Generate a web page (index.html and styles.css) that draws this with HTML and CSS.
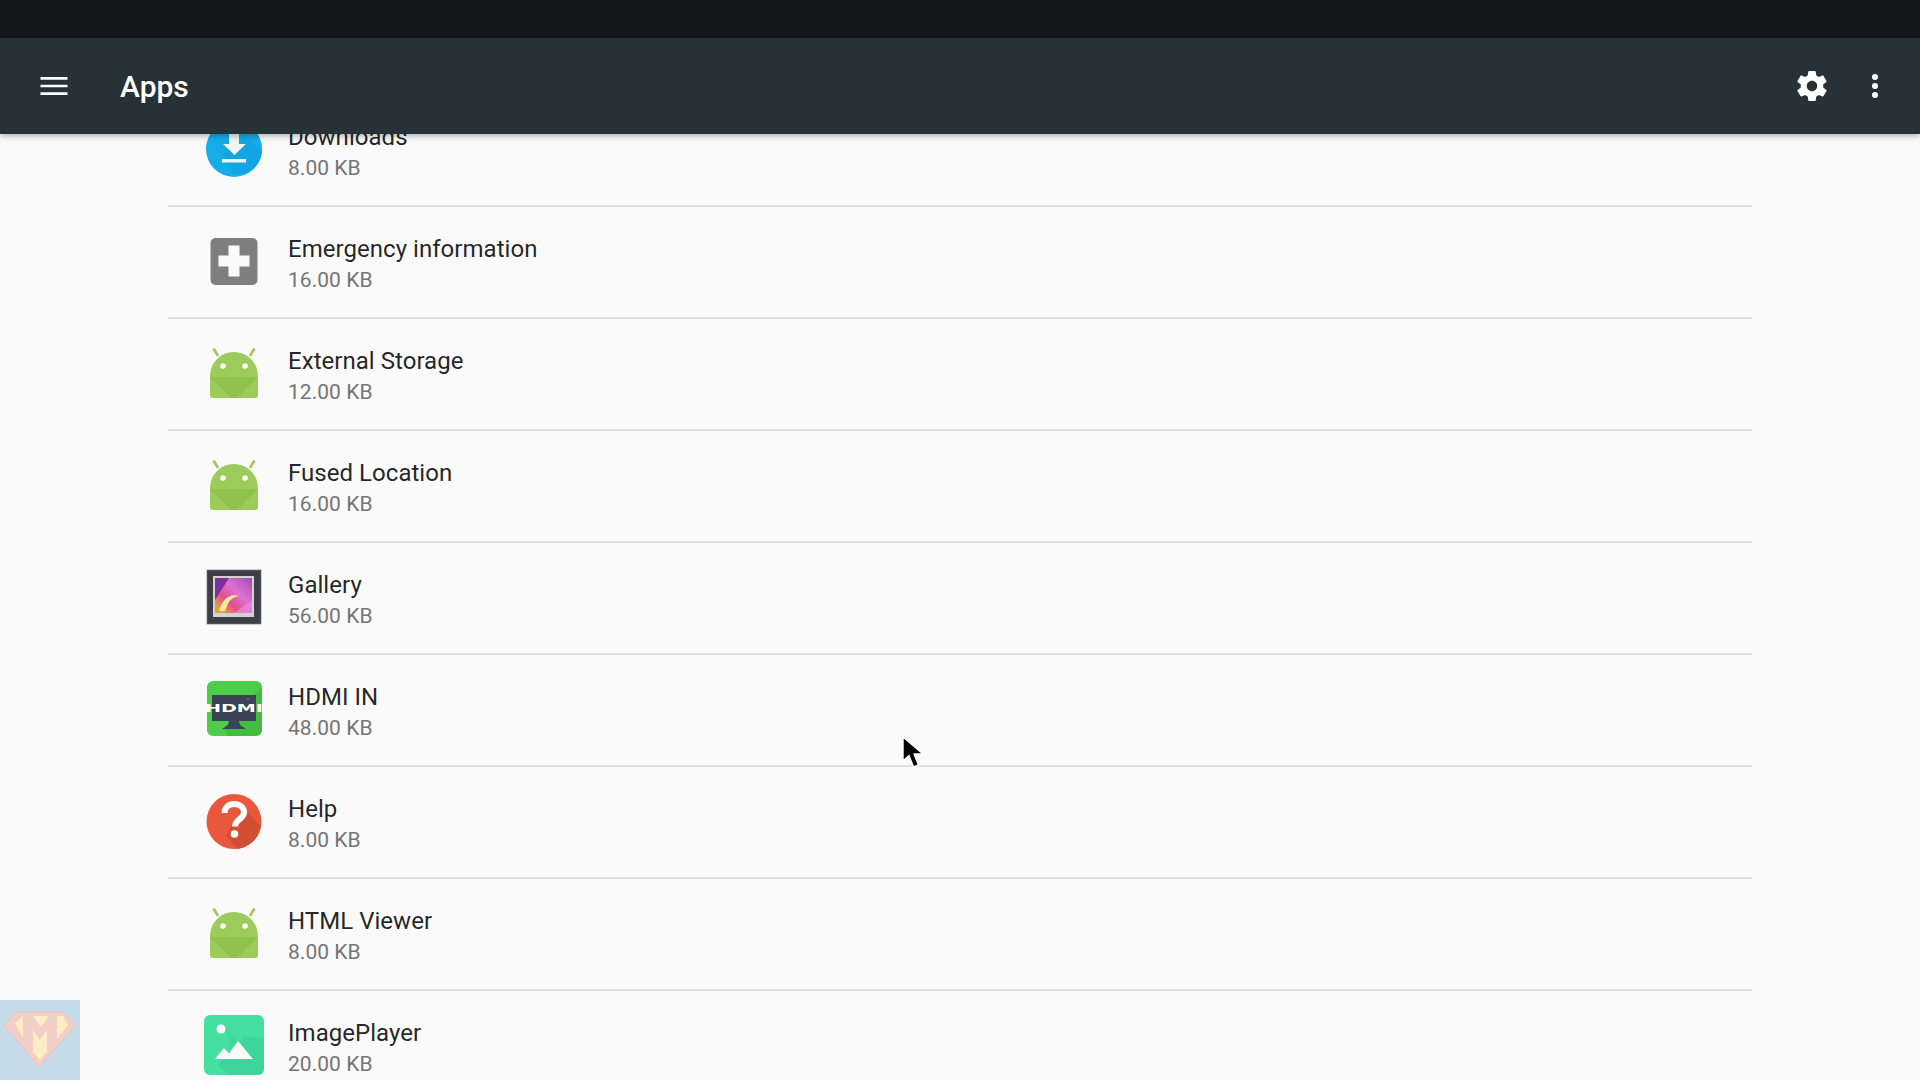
FILE: index.html
```html
<!DOCTYPE html>
<html lang="en">
<head>
<meta charset="utf-8">
<title>Apps</title>
<link rel="stylesheet" href="styles.css">
</head>
<body>
<div class="status-bar"></div>
<header class="app-bar">
  <svg class="bar-icon" viewBox="0 0 24 24"><path fill="#fff" d="M3 6h18v1.800H3zM3 11.100h18v1.800H3zM3 16.200h18V18H3z"/></svg>
  <h1 class="bar-title">Apps</h1>
  <div class="bar-actions">
    <svg class="bar-icon" viewBox="0 0 24 24"><path fill="#fff" d="M19.43 12.98c.04-.32.07-.64.07-.98s-.03-.66-.07-.98l2.11-1.65c.19-.15.24-.42.12-.64l-2-3.46c-.12-.22-.39-.3-.61-.22l-2.49 1c-.52-.4-1.08-.73-1.69-.98l-.38-2.65C14.46 2.18 14.25 2 14 2h-4c-.25 0-.46.18-.49.42l-.38 2.65c-.61.25-1.17.59-1.69.98l-2.49-1c-.23-.09-.49 0-.61.22l-2 3.46c-.13.22-.07.49.12.64l2.11 1.65c-.04.32-.07.65-.07.98s.03.66.07.98l-2.11 1.65c-.19.15-.24.42-.12.64l2 3.46c.12.22.39.3.61.22l2.49-1c.52.4 1.08.73 1.69.98l.38 2.65c.03.24.24.42.49.42h4c.25 0 .46-.18.49-.42l.38-2.65c.61-.25 1.17-.59 1.69-.98l2.49 1c.23.09.49 0 .61-.22l2-3.46c.12-.22.07-.49-.12-.64l-2.11-1.65zM12 15.5c-1.93 0-3.5-1.57-3.5-3.5s1.57-3.5 3.5-3.5 3.5 1.57 3.5 3.5-1.57 3.5-3.5 3.5z"/></svg>
    <svg class="bar-icon" viewBox="0 0 24 24"><circle fill="#fff" cx="12" cy="6" r="2"/><circle fill="#fff" cx="12" cy="12" r="2"/><circle fill="#fff" cx="12" cy="18" r="2"/></svg>
  </div>
</header>
<main class="viewport">
  <ul class="app-list">
    <li class="app-row">
      <svg class="app-icon" viewBox="0 0 60 60"><circle cx="30" cy="29" r="28" fill="#14ade9"/><path d="M30 54a24 24 0 0 0 28-22L40 14 19 34z" fill="#10a3de" opacity=".7"/><path fill="#f2f5f6" d="M25 9h10v15h7L30.500 35 19 24h6z"/><path fill="#f2f5f6" d="M18 39h24v3.500H18z"/></svg>
      <div class="app-text"><div class="app-name">Downloads</div><div class="app-size">8.00 KB</div></div>
    </li>
    <li class="app-row">
      <svg class="app-icon" viewBox="0 0 60 60"><rect x="6.500" y="6" width="47" height="47" rx="5" fill="#7f7f7f"/><path fill="#fafafa" d="M24.500 13.500h11v10h10v11h-10v10h-11v-10h-10v-11h10z"/></svg>
      <div class="app-text"><div class="app-name">Emergency information</div><div class="app-size">16.00 KB</div></div>
    </li>
    <li class="app-row">
      <svg class="app-icon" viewBox="0 0 60 60"><use href="#android"/></svg>
      <div class="app-text"><div class="app-name">External Storage</div><div class="app-size">12.00 KB</div></div>
    </li>
    <li class="app-row">
      <svg class="app-icon" viewBox="0 0 60 60"><use href="#android"/></svg>
      <div class="app-text"><div class="app-name">Fused Location</div><div class="app-size">16.00 KB</div></div>
    </li>
    <li class="app-row">
      <svg class="app-icon" viewBox="0 0 60 60">
        <defs><linearGradient id="photo" x1="0" y1="1" x2="1" y2="0"><stop offset="0" stop-color="#f0c22c"/><stop offset=".35" stop-color="#e0508a"/><stop offset=".6" stop-color="#dc72d4"/><stop offset="1" stop-color="#a24cb0"/></linearGradient></defs>
        <rect x="3" y="2" width="54" height="54" fill="#3e3e46"/>
        <rect x="3" y="2" width="54" height="54" fill="none" stroke="#77777d" stroke-width=".7"/>
        <rect x="9" y="8" width="41" height="41" fill="#d2d2d5"/>
        <rect x="11" y="10" width="37" height="35" fill="url(#photo)"/>
        <path d="M11 10h14L11 32z" fill="#7d2f9b"/>
        <path d="M48 12v20L30 45h18z" fill="#e78ae0" opacity=".7"/>
        <path d="M15 43c3-11 10-18 20-15-6 1-10 4-12 10l-2 5z" fill="#fde9a0"/>
        <path d="M11 36l6 9H11z" fill="#e8a020"/>
      </svg>
      <div class="app-text"><div class="app-name">Gallery</div><div class="app-size">56.00 KB</div></div>
    </li>
    <li class="app-row">
      <svg class="app-icon" viewBox="0 0 60 60">
        <rect x="3" y="1" width="55" height="55" rx="6" fill="#4ecb49"/>
        <path d="M58 8v42a6 6 0 0 1-6 6H24l-4-8 36-40z" fill="#3eb53e" opacity=".65"/>
        <rect x="8" y="15" width="44" height="26" fill="#3a4456"/>
        <path d="M25 41h10l1 4 6 4H18l6-4z" fill="#3a4456"/>
        <circle cx="44" cy="19" r="1" fill="#e2483f"/>
        <text class="hdmi-text" x="1" y="31.500" textLength="58" lengthAdjust="spacingAndGlyphs">HDMI</text>
      </svg>
      <div class="app-text"><div class="app-name">HDMI IN</div><div class="app-size">48.00 KB</div></div>
    </li>
    <li class="app-row">
      <svg class="app-icon" viewBox="0 0 60 60">
        <circle cx="30" cy="29.500" r="27.500" fill="#e9573d"/>
        <path d="M38 15l19 19a27.500 27.500 0 0 1-24 23L22 44z" fill="#d24e35"/>
        <path d="M20.500 21c0-5.500 4.300-9 9.700-9s9.800 3.300 9.800 8.300c0 6.700-9 7-9 14.200" fill="none" stroke="#fff" stroke-width="6"/>
        <circle cx="30.500" cy="42" r="3.800" fill="#fff"/>
      </svg>
      <div class="app-text"><div class="app-name">Help</div><div class="app-size">8.00 KB</div></div>
    </li>
    <li class="app-row">
      <svg class="app-icon" viewBox="0 0 60 60"><use href="#android"/></svg>
      <div class="app-text"><div class="app-name">HTML Viewer</div><div class="app-size">8.00 KB</div></div>
    </li>
    <li class="app-row">
      <svg class="app-icon" viewBox="0 0 60 60">
        <rect x="0" y="-1" width="60" height="60" rx="6" fill="#45e0a0"/>
        <path d="M60 22v31a6 6 0 0 1-6 6H24L14 49 40 20z" fill="#3bd095" opacity=".7"/>
        <path d="M21 11l28 32H30z" fill="#3bd095" opacity=".55"/>
        <circle cx="17" cy="13" r="4.500" fill="#fafafa"/>
        <path d="M11 43l9-11 5 5.500L34 25l15 18z" fill="#fafafa"/>
      </svg>
      <div class="app-text"><div class="app-name">ImagePlayer</div><div class="app-size">20.00 KB</div></div>
    </li>
  </ul>
</main>
<svg class="defs-only" width="0" height="0">
  <defs>
    <g id="android">
      <path d="M14 12L9.500 4.500M46 12l4.500-7.500" stroke="#9ccb5c" stroke-width="2.600" fill="none"/>
      <path d="M6 32a24 24 0 0 1 48 0v19a3 3 0 0 1-3 3H9a3 3 0 0 1-3-3z" fill="#9ccb5c"/>
      <path d="M6 33h48L33 54H27z" fill="#90c24f"/>
      <circle cx="19" cy="22" r="2.800" fill="#fafafa"/>
      <circle cx="41" cy="22" r="2.800" fill="#fafafa"/>
    </g>
  </defs>
</svg>
<svg class="cursor" viewBox="0 0 24 36"><path d="M2 2v24l6-5.500 4.500 11.500 5-2L13 19h9z" fill="#000" stroke="#fff" stroke-width="1.400" stroke-linejoin="round"/></svg>
<div class="watermark">
  <svg class="watermark-logo" viewBox="0 0 80 80">
    <path d="M16 12h47l13 13-37 42L4 25z" fill="#f1cec7" stroke="#e6c3bd"/>
    <path d="M23 16l-8 7 8 15zM57 16h6l5 9-11 14z" fill="#fbeec5"/>
    <path d="M33 16h16l-8 11z" fill="#fbeec5"/>
    <path d="M33 30l6.500 10 7.500-10v22l-7 8-7-8z" fill="#fbeec5"/>
  </svg>
</div>
</body>
</html>
```
FILE: styles.css
```css
* { box-sizing: border-box; }
html, body {
  margin: 0;
  height: 1080px;
  overflow: hidden;
  background: #fafafa;
  font-family: Roboto, "Noto Sans", sans-serif;
}
.status-bar { height: 38px; background: #13171a; }
.app-bar {
  position: relative;
  z-index: 2;
  height: 96px;
  display: flex;
  align-items: center;
  padding: 0 27px 0 36px;
  background: #263238;
  box-shadow: 0 2px 6px rgba(0, 0, 0, .3);
}
.bar-icon { width: 36px; height: 36px; display: block; flex: none; }
.bar-title {
  margin: 0 0 0 48px;
  font-size: 30px;
  font-weight: 500;
  color: #fff;
}
.bar-actions { margin-left: auto; display: flex; align-items: center; gap: 27px; }
.viewport { height: 946px; overflow: hidden; }
.app-list { list-style: none; margin: -39px 168px 0; padding: 0; }
.app-row {
  height: 112px;
  display: flex;
  align-items: center;
  gap: 24px;
  padding-left: 36px;
  border-bottom: 2px solid #dedede;
}
.app-icon { width: 60px; height: 60px; flex: none; overflow: visible; }
.app-text { padding-top: 2px; letter-spacing: .04px; }
.app-name { font-size: 24px; line-height: 32px; margin-bottom: 1px; color: rgba(0, 0, 0, .87); }
.app-size { font-size: 21px; line-height: 28px; color: #757575; }
.hdmi-text { font-family: "DejaVu Sans", sans-serif; font-size: 11px; font-weight: 700; fill: #fff; }
.defs-only { position: absolute; }
.cursor { position: absolute; left: 901px; top: 735px; width: 24px; height: 36px; z-index: 3; }
.watermark { position: absolute; left: 0; top: 1000px; width: 80px; height: 80px; background: #c5dbe8; z-index: 3; }
.watermark-logo { display: block; width: 80px; height: 80px; }
```
